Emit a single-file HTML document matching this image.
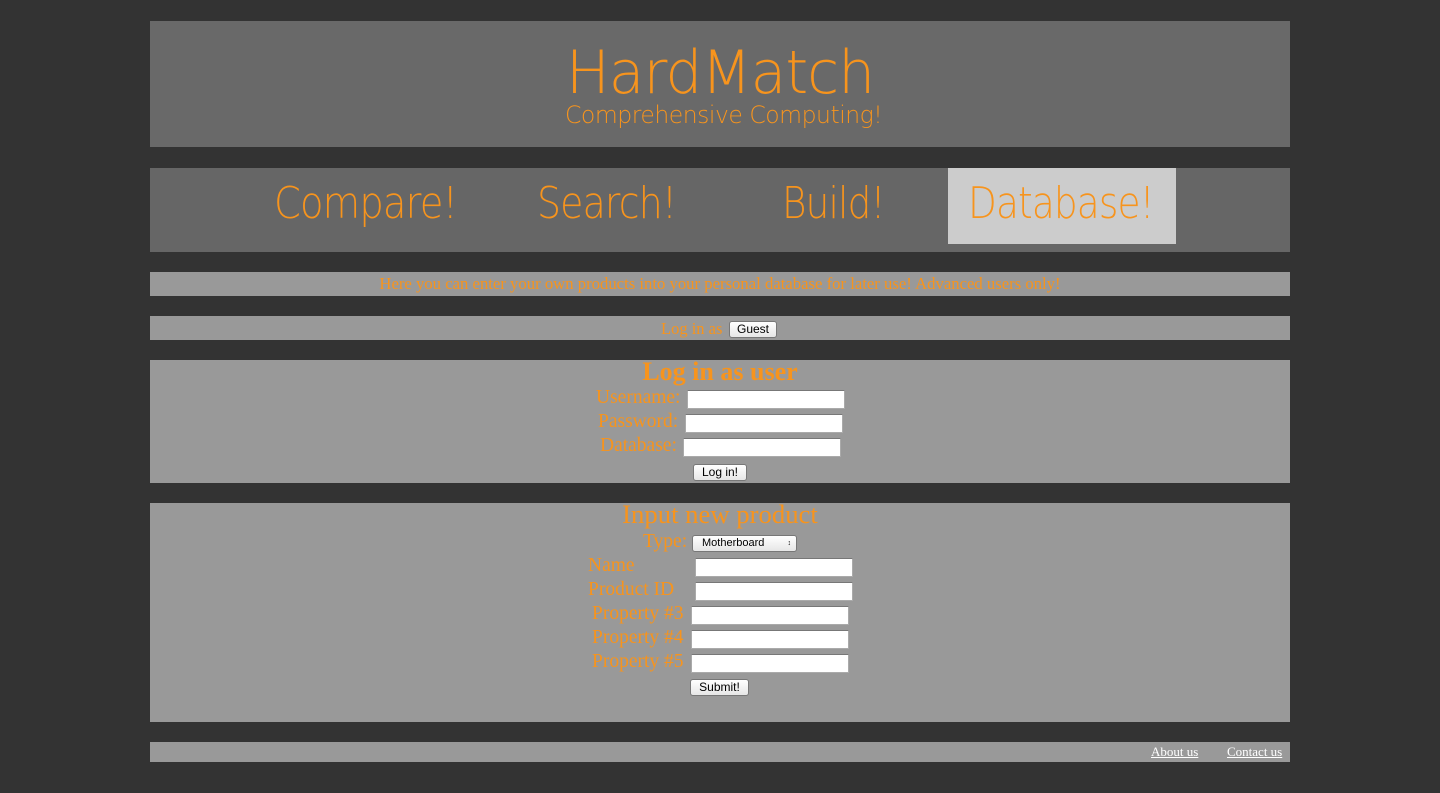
<!DOCTYPE html>
<html><head><meta charset="utf-8"><style>
body{margin:0;background:#333;width:1440px;height:793px;position:relative;overflow:hidden;font-family:"Liberation Serif",serif;color:#f7941d}
.a{position:absolute}
.box{position:absolute;left:150px;width:1140px;background:#999}
.thin{font-family:"DejaVu Sans","Liberation Sans",sans-serif;font-weight:200;color:#f7941d;white-space:nowrap;transform-origin:0 0}
.nav{font-size:44px;letter-spacing:-1px;transform:scaleX(0.85);top:178px}
.lbl{position:absolute;font-size:19.5px;white-space:nowrap}
.inp{position:absolute;height:19px;background:#fff;border:1px solid #aaa;border-top-color:#777;box-sizing:border-box;width:158px}
.btn{position:absolute;height:17px;background:linear-gradient(#fff,#e6e6e6);border:1px solid #777;border-radius:3px;font:12px "Liberation Sans",sans-serif;color:#000;text-align:center;line-height:15px;box-sizing:border-box}
</style></head><body>
<div class="a" style="left:150px;top:21px;width:1140px;height:126px;background:#696969"></div>
<div class="a thin" style="left:566px;top:38px;font-size:60px;letter-spacing:-1px;transform:scaleX(0.97)">HardMatch</div>
<div class="a thin" style="left:565px;top:101px;font-size:24px;letter-spacing:-0.5px;transform:scaleX(0.98)">Comprehensive Computing!</div>
<div class="a" style="left:150px;top:168px;width:1140px;height:84px;background:#666"></div>
<div class="a" style="left:948px;top:168px;width:228px;height:76px;background:#ccc"></div>
<div class="a thin nav" style="left:274px;transform:scaleX(0.875)">Compare!</div>
<div class="a thin nav" style="left:537px;transform:scaleX(0.86)">Search!</div>
<div class="a thin nav" style="left:782px">Build!</div>
<div class="a thin nav" style="left:968px">Database!</div>
<div class="box" style="top:272px;height:24px"></div>
<div class="a" style="left:0;width:1440px;top:274px;text-align:center;font-size:16.7px">Here you can enter your own products into your personal database for later use! Advanced users only!</div>
<div class="box" style="top:316px;height:24px"></div>
<div class="lbl" style="left:661px;top:319px;font-size:16.5px">Log in as</div>
<div class="btn" style="left:729px;top:321px;width:48px">Guest</div>
<div class="box" style="top:360px;height:123px"></div>
<div class="a" style="left:0;width:1440px;top:357px;text-align:center;font-size:26px;font-weight:bold">Log in as user</div>
<div class="lbl" style="left:596px;top:387px">Username:</div><div class="inp" style="left:687px;top:390px"></div>
<div class="lbl" style="left:598px;top:411px">Password:</div><div class="inp" style="left:685px;top:414px"></div>
<div class="lbl" style="left:600px;top:435px">Database:</div><div class="inp" style="left:683px;top:438px"></div>
<div class="btn" style="left:693px;top:464px;width:54px">Log in!</div>
<div class="box" style="top:503px;height:219px"></div>
<div class="a" style="left:0;width:1440px;top:499px;text-align:center;font-size:26.7px">Input new product</div>
<div class="lbl" style="left:643px;top:531px">Type:</div>
<div class="btn" style="left:692px;top:535px;width:105px;text-align:left;padding-left:9px;font-size:11px">Motherboard<span style="position:absolute;right:5px;font-size:7px">&#8597;</span></div>
<div class="lbl" style="left:588px;top:555px">Name</div><div class="inp" style="left:695px;top:558px"></div>
<div class="lbl" style="left:588px;top:579px">Product ID</div><div class="inp" style="left:695px;top:582px"></div>
<div class="lbl" style="left:592px;top:603px">Property #3</div><div class="inp" style="left:691px;top:606px"></div>
<div class="lbl" style="left:592px;top:627px">Property #4</div><div class="inp" style="left:691px;top:630px"></div>
<div class="lbl" style="left:592px;top:651px">Property #5</div><div class="inp" style="left:691px;top:654px"></div>
<div class="btn" style="left:690px;top:679px;width:59px">Submit!</div>
<div class="box" style="top:742px;height:20px"></div>
<div class="a" style="left:1151px;top:744px;font-size:13px;color:#fff;text-decoration:underline">About us</div>
<div class="a" style="left:1227px;top:744px;font-size:13px;color:#fff;text-decoration:underline">Contact us</div>
</body></html>
